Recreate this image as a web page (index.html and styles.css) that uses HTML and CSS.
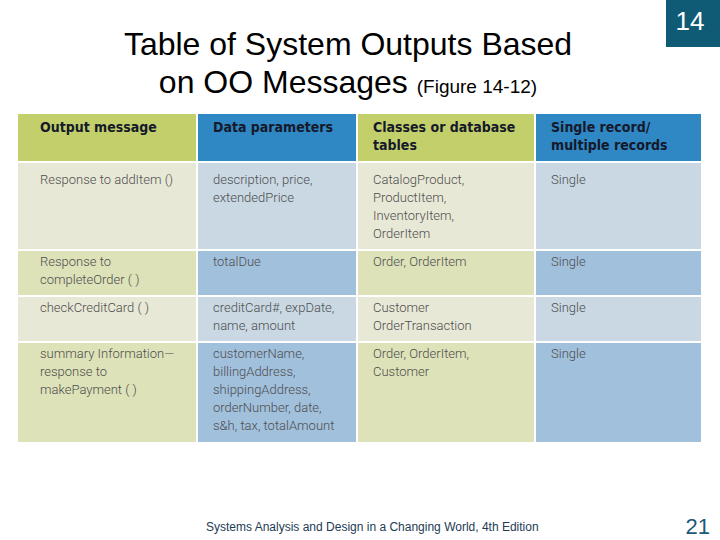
FILE: index.html
```html
<!DOCTYPE html>
<html>
<head>
<meta charset="utf-8">
<link rel="stylesheet" href="styles.css">
</head>
<body>
<div class="slide">
  <div class="badge">14</div>
  <h1 class="title">Table of System Outputs Based<br>on OO Messages <span class="fig">(Figure 14-12)</span></h1>
  <div class="table">
    <div class="cell head g c1">Output message</div>
    <div class="cell head b">Data parameters</div>
    <div class="cell head g">Classes or database tables</div>
    <div class="cell head b">Single record/<br>multiple records</div>

    <div class="cell lg c1 first">Response to addItem ()</div>
    <div class="cell lb first">description, price,<br>extendedPrice</div>
    <div class="cell lg first">CatalogProduct,<br>ProductItem,<br>InventoryItem,<br>OrderItem</div>
    <div class="cell lb first">Single</div>

    <div class="cell dg c1">Response to<br>completeOrder ( )</div>
    <div class="cell db">totalDue</div>
    <div class="cell dg">Order, OrderItem</div>
    <div class="cell db">Single</div>

    <div class="cell lg c1">checkCreditCard ( )</div>
    <div class="cell lb">creditCard#, expDate,<br>name, amount</div>
    <div class="cell lg">Customer<br>OrderTransaction</div>
    <div class="cell lb">Single</div>

    <div class="cell dg c1">summary Information—<br>response to<br>makePayment ( )</div>
    <div class="cell db">customerName,<br>billingAddress,<br>shippingAddress,<br>orderNumber, date,<br>s&amp;h, tax, totalAmount</div>
    <div class="cell dg">Order, OrderItem,<br>Customer</div>
    <div class="cell db">Single</div>
  </div>
  <div class="footer">
    <span class="source">Systems Analysis and Design in a Changing World, 4th Edition</span>
    <span class="page">21</span>
  </div>
</div>
</body>
</html>
```
FILE: styles.css
```css
html, body {
  margin: 0;
  padding: 0;
  background: #ffffff;
}
.slide {
  position: relative;
  width: 720px;
  height: 540px;
  display: flex;
  flex-direction: column;
  font-family: "Liberation Sans", Arial, sans-serif;
  overflow: hidden;
}
.badge {
  position: absolute;
  top: 0;
  right: 0;
  width: 54px;
  height: 47px;
  padding-right: 6px;
  box-sizing: border-box;
  background: #0f5a74;
  color: #ffffff;
  font-size: 26px;
  line-height: 42px;
  text-align: center;
}
.title {
  margin: 0;
  padding-top: 25px;
  height: 76px;
  width: 696px;
  text-align: center;
  font-weight: normal;
  font-size: 32px;
  line-height: 38px;
  color: #000000;
}
.fig {
  font-size: 19px;
  line-height: 20px;
}
.table {
  margin-top: 13px;
  margin-left: 18px;
  display: grid;
  grid-template-columns: 178px 158px 176px 165px;
  grid-template-rows: 47px 86px 44px 44px 99px;
  gap: 2px;
}
.cell {
  padding: 2px 8px 0 15px;
  font-family: Roboto, "Liberation Sans", sans-serif;
  font-weight: 300;
  font-size: 13px;
  line-height: 18px;
  color: #4e4e4e;
}
.cell.c1 {
  padding-left: 22px;
}
.cell.first {
  padding-top: 8px;
}
.cell.head {
  padding-top: 4px;
  font-family: "DejaVu Sans Condensed", "DejaVu Sans", sans-serif;
  font-weight: bold;
  font-size: 14px;
  line-height: 18px;
  color: #15192a;
}
.g { background: #c3cf6b; }
.b { background: #2f87c4; }
.lg { background: #e8e8d6; }
.lb { background: #c9d8e3; }
.dg { background: #dde2b9; }
.db { background: #a1c0dc; }
.footer {
  margin-top: auto;
  height: 26px;
  display: flex;
  align-items: center;
  padding-left: 206px;
  padding-right: 10px;
}
.source {
  font-size: 12px;
  color: #1d3b55;
}
.page {
  margin-left: auto;
  font-size: 22px;
  color: #1d5877;
}
```
